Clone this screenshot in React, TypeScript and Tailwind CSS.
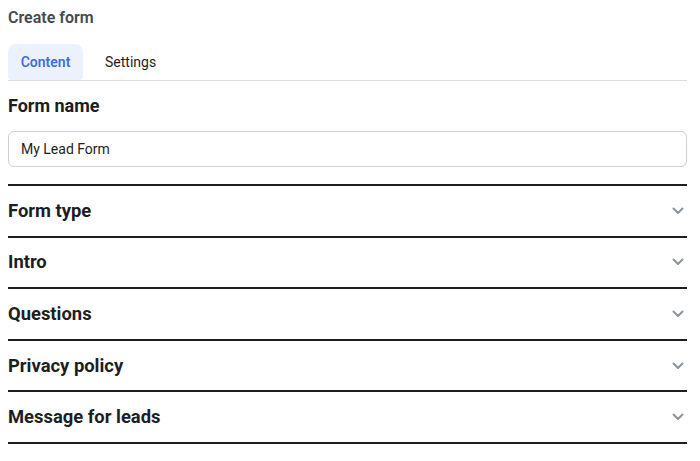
const sections = ["Form type", "Intro", "Questions", "Privacy policy", "Message for leads"];

const Chevron = () => (
  <svg width="12" height="8" viewBox="0 0 12 8" fill="none" className="text-[#8d949e]">
    <path d="M1.5 1.5 6 6l4.5-4.5" stroke="currentColor" strokeWidth="2" strokeLinecap="round" strokeLinejoin="round" />
  </svg>
);

export default function App() {
  return (
    <div className="w-[700px] h-[461px] bg-white px-2 font-['Roboto',sans-serif] text-[#1c1e21]">
      <div className="w-[679px]">
        <h1 className="pt-[8px] text-[16px] font-semibold leading-[20px] text-[#444950]">Create form</h1>

        <div className="mt-[16px] flex border-b border-[#dadde1]">
          <button className="h-[36px] w-[75px] rounded-t-[8px] rounded-b-[4px] bg-[#ebf2fe] text-[14px] font-semibold text-[#3f6ee0]">
            Content
          </button>
          <button className="h-[36px] px-[22px] text-[14px] text-[#1c1e21]">Settings</button>
        </div>

        <h2 className="mt-[13px] text-[18px] font-bold leading-[24px]">Form name</h2>

        <div className="mt-[13px] flex h-[36px] items-center rounded-[6px] border border-[#ccd0d5] px-[12px] text-[14px]">
          My Lead Form
        </div>

        <div className="mt-[17px] border-t-2 border-[#1c1e21]">
          {sections.map((s) => (
            <div
              key={s}
              className="flex h-[51.6px] items-center justify-between border-b-2 border-[#1c1e21] pr-[3px]"
            >
              <span className="text-[18.4px] font-bold leading-[24px]">{s}</span>
              <Chevron />
            </div>
          ))}
        </div>
      </div>
    </div>
  );
}
